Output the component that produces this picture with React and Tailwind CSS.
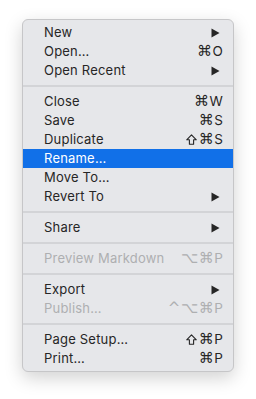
import React from "react";

const Arrow = () => (
  <svg width="9" height="10" viewBox="0 0 9 10" className="mr-[3px]">
    <path d="M0.5 0.5 L8.5 5 L0.5 9.5 Z" fill="#262626" />
  </svg>
);

const Shift = () => (
  <svg width="11" height="11" viewBox="0 0 11 11" className="mr-[2px]">
    <path
      d="M5.5 0.8 L10.3 5.8 L7.6 5.8 L7.6 10.2 L3.4 10.2 L3.4 5.8 L0.7 5.8 Z"
      fill="none"
      stroke="currentColor"
      strokeWidth="1.1"
      strokeLinejoin="round"
    />
  </svg>
);

const rows = [
  { t: "New", arrow: true },
  { t: "Open…", m: "⌘", k: "O" },
  { t: "Open Recent", arrow: true },
  "sep",
  { t: "Close", m: "⌘", k: "W" },
  { t: "Save", m: "⌘", k: "S" },
  { t: "Duplicate", shift: true, m: "⌘", k: "S" },
  { t: "Rename…", sel: true },
  { t: "Move To…" },
  { t: "Revert To", arrow: true },
  "sep",
  { t: "Share", arrow: true },
  "sep",
  { t: "Preview Markdown", m: "⌥⌘", k: "P", dis: true },
  "sep",
  { t: "Export", arrow: true },
  { t: "Publish…", m: "^⌥⌘", k: "P", dis: true },
  "sep",
  { t: "Page Setup…", shift: true, m: "⌘", k: "P" },
  { t: "Print…", m: "⌘", k: "P" },
];

export default function App() {
  return (
    <div className="w-[256px] h-[399px] bg-white pt-[19px] pl-[22px]" style={{ fontFamily: "Inter, 'Noto Sans', sans-serif" }}>
      <div className="w-[212px] bg-[#e6e7ea] border border-[#c6c6c8] rounded-[6px] py-[3px] shadow-[0_6px_18px_rgba(0,0,0,0.18)]">
        {rows.map((r, i) =>
          r === "sep" ? (
            <div key={i} className="h-[12px] flex items-center">
              <div className="w-full h-[2px] bg-[#d3d4d7]" />
            </div>
          ) : (
            <div
              key={i}
              className={
                "h-[19px] flex items-center justify-between pl-[21px] pr-[10px] text-[13px] leading-none tracking-[0.2px] " +
                (r.sel ? "bg-[#1170e8] text-white" : r.dis ? "text-[#aeafb1]" : "text-[#262626]")
              }
            >
              <span>{r.t}</span>
              {r.arrow ? (
                <Arrow />
              ) : r.k ? (
                <span className="flex items-center">
                  {r.shift ? <Shift /> : null}
                  <span
                    className="text-[15px] tracking-[0.5px]"
                    style={{ fontFamily: "'DejaVu Sans', 'Noto Sans', sans-serif" }}
                  >
                    {r.m}
                  </span>
                  <span className="text-[13.5px]">{r.k}</span>
                </span>
              ) : null}
            </div>
          )
        )}
      </div>
    </div>
  );
}
